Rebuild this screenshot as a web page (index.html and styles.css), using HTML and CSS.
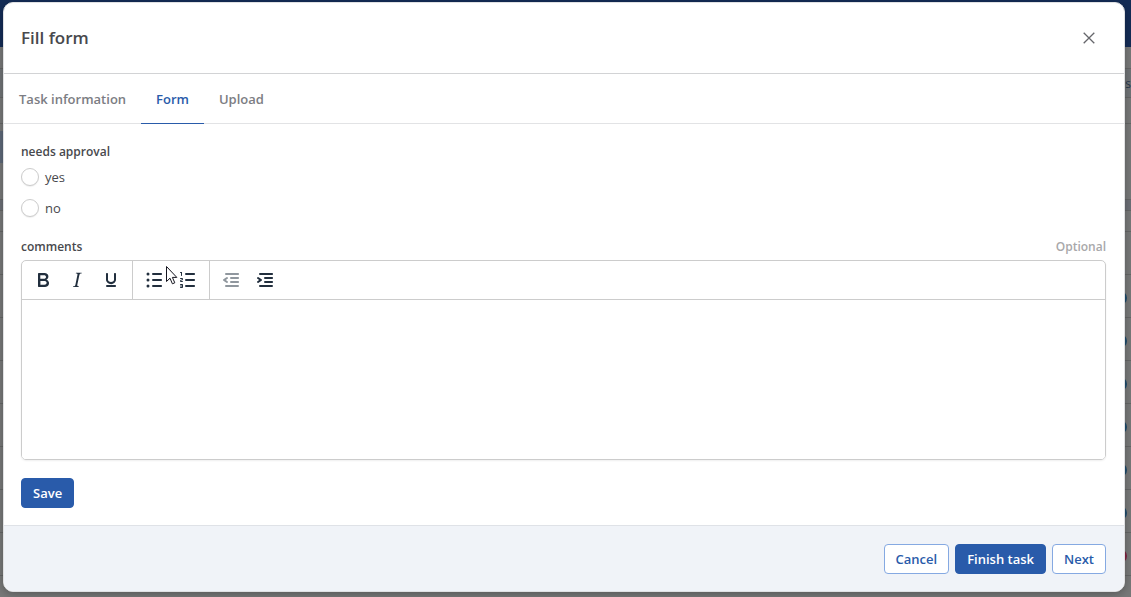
FILE: index.html
```html
<!DOCTYPE html>
<html lang="en">
<head>
<meta charset="utf-8">
<meta name="viewport" content="width=device-width, initial-scale=1">
<title>Fill form</title>
<link rel="stylesheet" href="styles.css">
</head>
<body>
<div class="page" aria-hidden="true">
  <div class="topbar"></div>
  <div class="strip strip-title"></div>
  <div class="strip strip-tabs">ns</div>
  <div class="strip strip-filter"></div>
  <div class="strip strip-space"></div>
  <div class="strip strip-head"></div>
  <div class="strip strip-first"></div>
  <div class="row"></div>
  <div class="row"><span class="avatar"></span></div>
  <div class="row"><span class="avatar"></span></div>
  <div class="row"><span class="avatar"></span></div>
  <div class="row"><span class="avatar"></span></div>
  <div class="row"><span class="avatar"></span></div>
  <div class="row"><span class="avatar"></span></div>
  <div class="row"><span class="avatar avatar-red"></span></div>
  <div class="nav-selected"></div>
</div>

<div class="modal" role="dialog" aria-modal="true" aria-labelledby="title">
  <header class="modal-header">
    <h1 class="title" id="title">Fill form</h1>
    <button class="close" type="button" aria-label="Close">
      <svg width="12" height="12" viewBox="0 0 12 12" fill="none" stroke="currentColor" stroke-width="1.3"><path d="M.7.7l10.600 10.600M11.300.7L.7 11.300"/></svg>
    </button>
  </header>

  <div class="tabs" role="tablist">
    <button class="tab" type="button" role="tab" aria-selected="false">Task information</button>
    <button class="tab tab-active" type="button" role="tab" aria-selected="true">Form</button>
    <button class="tab" type="button" role="tab" aria-selected="false">Upload</button>
  </div>

  <form class="content">
    <fieldset class="choices">
      <legend class="label">needs approval</legend>
      <label class="choice"><input class="radio" type="radio" name="approval" value="yes">yes</label>
      <label class="choice"><input class="radio" type="radio" name="approval" value="no">no</label>
    </fieldset>

    <div class="label-row">
      <label class="label" for="comments">comments</label>
      <span class="optional">Optional</span>
    </div>
    <div class="editor">
      <div class="toolbar" role="toolbar" aria-label="Formatting">
        <div class="group">
          <button class="tool" type="button" aria-label="Bold"><svg width="24" height="24" viewBox="0 0 24 24"><path fill="currentColor" fill-rule="evenodd" d="M7.800 19c-.3 0-.5 0-.6-.2l-.2-.5V5.700c0-.2 0-.4.2-.5l.6-.2h5c1.500 0 2.700.3 3.500 1 .7.6 1.100 1.400 1.100 2.500a3 3 0 0 1-.6 1.900c-.4.6-1 1-1.600 1.200.4.1.9.3 1.300.6s.8.700 1 1.200c.4.4.5 1 .5 1.600 0 1.300-.4 2.300-1.300 3-.8.7-2.100 1-3.800 1H7.800zm5-8.300c.6 0 1.200-.1 1.600-.5.4-.3.6-.7.6-1.300 0-1.100-.8-1.700-2.300-1.700H9.300v3.500h3.400zm.5 6c.7 0 1.300-.1 1.700-.4.4-.4.600-.9.600-1.500s-.2-1-.7-1.400c-.4-.3-1-.4-2-.4H9.400v3.800h4z"/></svg></button>
          <button class="tool" type="button" aria-label="Italic"><svg width="24" height="24" viewBox="0 0 24 24"><path fill="currentColor" fill-rule="evenodd" d="M16.700 4.700l-.1.900h-.3c-.6 0-1 0-1.400.3-.3.300-.4.600-.5 1.100l-2.100 9.800v.6c0 .5.400.8 1.400.8h.2l-.2.800H8l.2-.8h.2c1.100 0 1.800-.5 2-1.500l2-9.800.1-.5c0-.6-.4-.8-1.400-.8h-.3l.2-.9h5.800z"/></svg></button>
          <button class="tool" type="button" aria-label="Underline"><svg width="24" height="24" viewBox="0 0 24 24"><path fill="currentColor" fill-rule="evenodd" d="M16 5c.6 0 1 .4 1 1v5.500a4 4 0 0 1-.4 1.800l-1 1.400a5.300 5.300 0 0 1-5.500 1 5 5 0 0 1-1.600-1c-.5-.4-.8-.9-1.100-1.400a4 4 0 0 1-.4-1.800V6c0-.6.400-1 1-1s1 .4 1 1v5.500c0 .3 0 .6.2 1l.6.700a3.300 3.300 0 0 0 2.200.8 3.400 3.400 0 0 0 2.200-.8c.3-.2.4-.5.600-.8l.2-.9V6c0-.6.4-1 1-1zM8 17h8c.6 0 1 .4 1 1s-.4 1-1 1H8a1 1 0 0 1 0-2z"/></svg></button>
        </div>
        <div class="group">
          <button class="tool" type="button" aria-label="Bullet list"><svg width="24" height="24" viewBox="0 0 24 24"><path fill="currentColor" fill-rule="evenodd" d="M11 5h8c.6 0 1 .4 1 1s-.4 1-1 1h-8a1 1 0 0 1 0-2zm0 6h8c.6 0 1 .4 1 1s-.4 1-1 1h-8a1 1 0 0 1 0-2zm0 6h8c.6 0 1 .4 1 1s-.4 1-1 1h-8a1 1 0 0 1 0-2zM4.500 6A1.500 1.500 0 1 1 7.500 6 1.500 1.500 0 0 1 4.500 6zm0 6a1.500 1.500 0 1 1 3 0 1.500 1.500 0 0 1-3 0zm0 6a1.500 1.500 0 1 1 3 0 1.500 1.500 0 0 1-3 0z"/></svg></button>
          <button class="tool" type="button" aria-label="Numbered list"><svg width="24" height="24" viewBox="0 0 24 24"><path fill="currentColor" fill-rule="evenodd" d="M10 17h8c.6 0 1 .4 1 1s-.4 1-1 1h-8a1 1 0 0 1 0-2zm0-6h8c.6 0 1 .4 1 1s-.4 1-1 1h-8a1 1 0 0 1 0-2zm0-6h8c.6 0 1 .4 1 1s-.4 1-1 1h-8a1 1 0 1 1 0-2zM6 4v3.500c0 .3-.2.500-.5.500a.5.5 0 0 1-.5-.5V5h-.5a.5.5 0 0 1 0-1H6zm-1 8.800l.2.200h1.300c.3 0 .5.200.5.500s-.2.500-.5.500H4.900a1 1 0 0 1-.9-1V13c0-.4.300-.8.600-1l1.200-.4.200-.3a.2.200 0 0 0-.2-.2H4.500a.5.500 0 0 1-.5-.5c0-.3.200-.5.500-.5h1.600c.5 0 .9.400.9 1v.1c0 .4-.3.800-.6 1l-1.200.4-.2.300zM7 17v2c0 .6-.4 1-1 1H4.500a.5.500 0 0 1 0-1h1.200c.2 0 .3-.1.300-.3 0-.2-.1-.3-.3-.3H4.400a.4.400 0 1 1 0-.8h1.300c.2 0 .3-.1.300-.3 0-.2-.1-.3-.3-.3H4.500a.5.500 0 1 1 0-1H6c.6 0 1 .4 1 1z"/></svg></button>
        </div>
        <div class="group">
          <button class="tool" type="button" aria-label="Decrease indent" disabled><svg width="24" height="24" viewBox="0 0 24 24"><path fill="currentColor" fill-rule="evenodd" d="M7 5h12c.6 0 1 .4 1 1s-.4 1-1 1H7a1 1 0 1 1 0-2zm5 4h7c.6 0 1 .4 1 1s-.4 1-1 1h-7a1 1 0 0 1 0-2zm0 4h7c.6 0 1 .4 1 1s-.4 1-1 1h-7a1 1 0 0 1 0-2zm-5 4h12a1 1 0 0 1 0 2H7a1 1 0 0 1 0-2zm1.600-3.800a1 1 0 0 1-1.200 1.600l-3-2a1 1 0 0 1 0-1.600l3-2a1 1 0 0 1 1.200 1.600L6.800 12l1.800 1.200z"/></svg></button>
          <button class="tool" type="button" aria-label="Increase indent"><svg width="24" height="24" viewBox="0 0 24 24"><path fill="currentColor" fill-rule="evenodd" d="M7 5h12c.6 0 1 .4 1 1s-.4 1-1 1H7a1 1 0 1 1 0-2zm5 4h7c.6 0 1 .4 1 1s-.4 1-1 1h-7a1 1 0 0 1 0-2zm0 4h7c.6 0 1 .4 1 1s-.4 1-1 1h-7a1 1 0 0 1 0-2zm-5 4h12a1 1 0 0 1 0 2H7a1 1 0 0 1 0-2zm-2.600-3.800L6.200 12l-1.800-1.200a1 1 0 0 1 1.200-1.600l3 2a1 1 0 0 1 0 1.600l-3 2a1 1 0 1 1-1.200-1.600z"/></svg></button>
        </div>
      </div>
      <textarea class="text" id="comments"></textarea>
    </div>
    <button class="button button-primary" type="button">Save</button>
  </form>

  <footer class="modal-footer">
    <button class="button" type="button">Cancel</button>
    <button class="button button-primary" type="button">Finish task</button>
    <button class="button" type="button">Next</button>
  </footer>
</div>

<svg class="cursor" width="13" height="21" viewBox="0 0 13 21" aria-hidden="true"><path d="M1.500 1.500v15l3.500-3.300 2.400 5.600 2.400-1-2.400-5.400h4.400z" fill="#fff" stroke="#15151f"/></svg>
</body>
</html>
```

FILE: styles.css
```css
* {
  box-sizing: border-box;
}

body {
  margin: 0;
  height: 100vh;
  overflow: hidden;
  background: #777878;
  color: #48494d;
  font: 13px/20px "Open Sans", "Noto Sans", sans-serif;
}

button,
textarea {
  font: inherit;
  color: inherit;
}

/* Dimmed page behind the dialog */
.page {
  position: absolute;
  inset: 0;
  overflow: hidden;
}

.topbar {
  height: 47px;
  background: #142c56;
}

.strip,
.row {
  border-bottom: 1px solid #656666;
}

.strip-title {
  height: 22px;
}

.strip-tabs {
  height: 29px;
  padding: 5px 0;
  background: #707376;
  color: #27384c;
  font-size: 12px;
  line-height: 20px;
  text-align: right;
}

.strip-filter {
  height: 26px;
}

.strip-space {
  height: 76px;
}

.strip-head {
  height: 11px;
  background: #6c6f76;
}

.strip-first {
  height: 21px;
}

.row {
  display: flex;
  align-items: center;
  justify-content: flex-end;
  height: 43px;
  padding: 4px 4px 0 0;
}

.avatar {
  width: 14px;
  height: 14px;
  border: 2px solid #1d4a6c;
  border-radius: 50%;
}

.avatar-red {
  border-color: #802040;
}

.nav-selected {
  position: absolute;
  left: 0;
  top: 131px;
  width: 60px;
  height: 32px;
  background: #5d6878;
}

/* Dialog */
.modal {
  position: absolute;
  inset: 2px 6px 5px 3px;
  display: flex;
  flex-direction: column;
  overflow: hidden;
  border: 1px solid #e0e1e3;
  border-radius: 10px;
  background: #fff;
  box-shadow: 0 2px 8px #0004;
}

.modal-header {
  display: flex;
  align-items: center;
  justify-content: space-between;
  height: 71px;
  padding: 0 23px 0 17px;
  border-bottom: 1px solid #d2d3d5;
}

.title {
  margin: 0;
  font-size: 17px;
  line-height: 24px;
  font-weight: 600;
}

.close {
  display: grid;
  place-items: center;
  width: 24px;
  height: 24px;
  padding: 0;
  border: 0;
  background: none;
  color: #65666b;
}

.tabs {
  display: flex;
  height: 50px;
  border-bottom: 1px solid #e2e3e5;
}

.tab {
  height: 50px;
  padding: 0 15px;
  border: 0;
  border-bottom: 1px solid transparent;
  background: none;
  color: #7c7d83;
  font-weight: 600;
}

.tab-active {
  border-color: #295baa;
  color: #295baa;
}

.content {
  flex: 1;
  padding: 18px 18px 0 17px;
}

.choices {
  display: grid;
  gap: 11px;
  margin: 0;
  padding: 5px 0 0;
  border: 0;
}

.label,
.optional {
  padding: 0;
  font-size: 12px;
  line-height: 20px;
  font-weight: 600;
}

.choice {
  display: flex;
  align-items: center;
  gap: 6px;
  width: max-content;
}

.radio {
  appearance: none;
  width: 18px;
  height: 18px;
  margin: 0;
  border: 1px solid #ccc;
  border-radius: 50%;
  background: #fff;
  box-shadow: 0 1px 1px #0001;
}

.radio:checked {
  border: 5px solid #295baa;
}

.label-row {
  display: flex;
  justify-content: space-between;
  margin: 19px 0 3px;
}

.optional {
  color: #a8a8aa;
}

.editor {
  overflow: hidden;
  border: 1px solid #ccc;
  border-radius: 5px;
  box-shadow: 0 1px 2px #0001;
}

.toolbar {
  display: flex;
  height: 39px;
  border-bottom: 1px solid #ccc;
}

.group {
  display: flex;
  align-items: center;
  padding: 0 4px;
}

.group + .group {
  border-left: 1px solid #ccc;
}

.tool {
  display: grid;
  place-items: center;
  width: 34px;
  height: 34px;
  padding: 0;
  border: 0;
  background: none;
  color: #222f3e;
}

.tool:disabled {
  color: #222f3e80;
}

.text {
  display: block;
  width: 100%;
  height: 159px;
  padding: 8px;
  border: 0;
  outline: 0;
  resize: none;
}

.button {
  height: 30px;
  padding: 0 11px;
  border: 1px solid #85a9e2;
  border-radius: 4px;
  background: #fff;
  color: #295baa;
  font-weight: 600;
}

.button-primary {
  border-color: #295baa;
  background: #295baa;
  color: #fff;
}

.editor + .button {
  margin-top: 18px;
}

.modal-footer {
  display: flex;
  align-items: center;
  justify-content: flex-end;
  gap: 6px;
  height: 66px;
  padding-right: 18px;
  border-top: 1px solid #dfe2e7;
  background: #f0f3f8;
}

.cursor {
  position: absolute;
  left: 165px;
  top: 265px;
}
```
